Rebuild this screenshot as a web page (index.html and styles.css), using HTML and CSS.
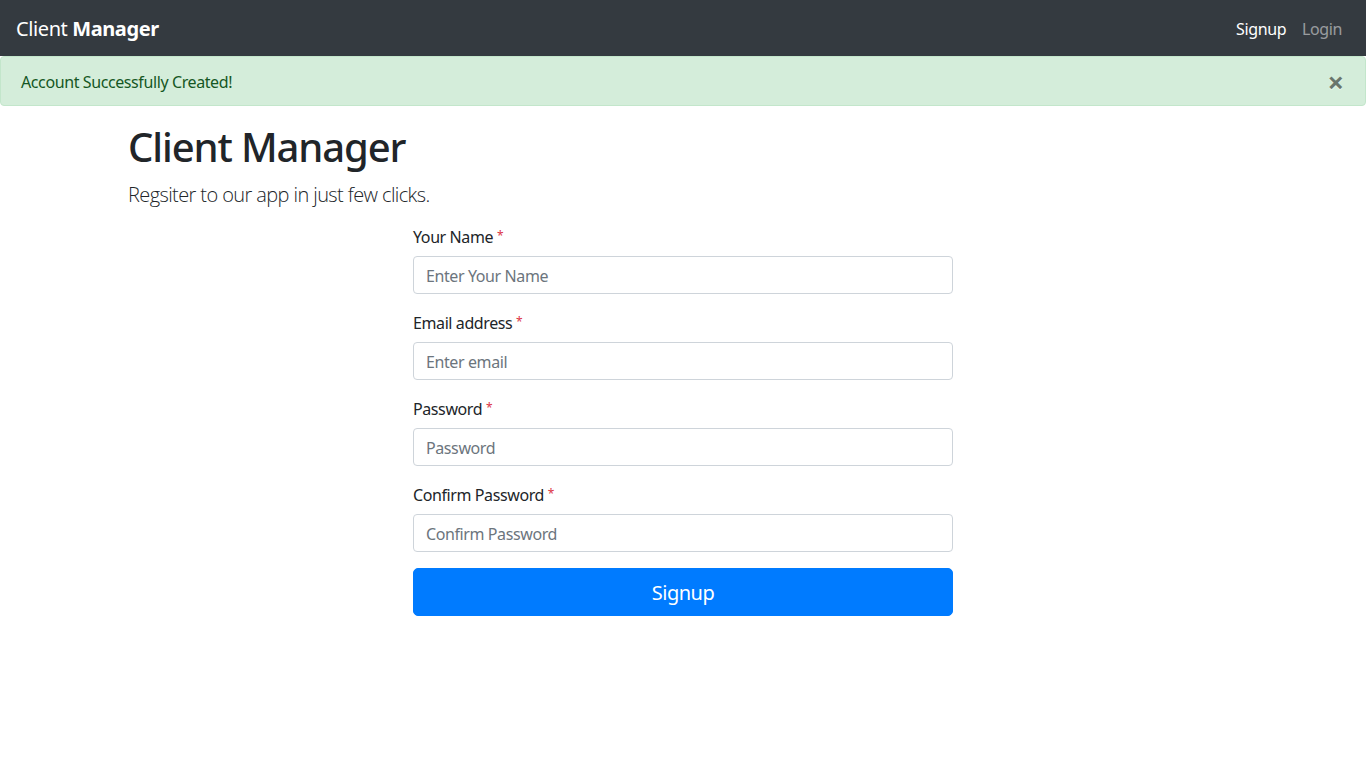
FILE: index.html
```html
<!DOCTYPE html>
<html lang="en">
<head>
<meta charset="utf-8">
<title>Client Manager</title>
<link rel="stylesheet" href="styles.css">
</head>
<body>
<nav class="navbar">
  <a class="brand" href="#">Client <b>Manager</b></a>
  <ul class="nav">
    <li><a class="nav-link active" href="#">Signup</a></li>
    <li><a class="nav-link" href="#">Login</a></li>
  </ul>
</nav>
<div class="alert">
  <span>Account Successfully Created!</span>
  <button class="close" type="button" aria-label="Close">&times;</button>
</div>
<main class="container">
  <h1 class="title">Client Manager</h1>
  <p class="lead">Regsiter to our app in just few clicks.</p>
  <div class="row">
    <form class="form-col">
      <div class="form-group">
        <label>Your Name <span class="req">*</span></label>
        <input class="form-control" type="text" placeholder="Enter Your Name">
      </div>
      <div class="form-group">
        <label>Email address <span class="req">*</span></label>
        <input class="form-control" type="email" placeholder="Enter email">
      </div>
      <div class="form-group">
        <label>Password <span class="req">*</span></label>
        <input class="form-control" type="password" placeholder="Password">
      </div>
      <div class="form-group">
        <label>Confirm Password <span class="req">*</span></label>
        <input class="form-control" type="password" placeholder="Confirm Password">
      </div>
      <button class="btn-primary" type="button">Signup</button>
    </form>
  </div>
</main>
</body>
</html>
```
FILE: styles.css
```css
* { box-sizing: border-box; }
html, body { margin: 0; }
body {
  font-family: "Segoe UI", "Noto Sans", "Open Sans", sans-serif;
  font-size: 16px;
  line-height: 1.5;
  letter-spacing: -0.025em;
  color: #212529;
  background: #fff;
}
.navbar {
  height: 56px;
  background: #343a40;
  display: flex;
  align-items: center;
  justify-content: space-between;
  padding: 10px 16px 8px;
}
.brand {
  color: #fff;
  text-decoration: none;
  font-size: 20px;
  line-height: 30px;
}
.brand b { font-weight: 700; }
.nav {
  list-style: none;
  margin: 0;
  padding: 0;
  display: flex;
}
.nav-link {
  display: block;
  padding: 8px;
  color: rgba(255,255,255,.5);
  text-decoration: none;
}
.nav-link.active { color: #fff; }
.alert {
  position: relative;
  background: #d4edda;
  border: 1px solid #c3e6cb;
  color: #155724;
  border-radius: 4px;
  padding: 13px 64px 11px 20px;
  margin-bottom: 16px;
}
.close {
  position: absolute;
  top: 0;
  right: 0;
  padding: 10px 21px;
  background: transparent;
  border: 0;
  font-family: "Noto Sans", sans-serif;
  font-size: 29px;
  font-weight: 700;
  line-height: 1;
  letter-spacing: 0;
  color: #000;
  opacity: .5;
  text-shadow: 0 1px 0 #fff;
  cursor: pointer;
}
.container {
  max-width: 1140px;
  margin: 0 auto;
  padding: 0 15px;
}
.title {
  margin: 0 0 10px;
  padding-top: 2px;
  font-size: 40px;
  font-weight: 500;
  line-height: 46px;
  letter-spacing: -0.028em;
}
.lead {
  margin: 0 0 14px;
  font-family: "Open Sans", "Noto Sans", sans-serif;
  font-size: 20px;
  font-weight: 300;
  letter-spacing: -0.03em;
}
.row {
  display: flex;
  justify-content: center;
  margin: 0 -15px;
}
.form-col {
  width: 50%;
  padding: 0 15px;
}
.form-group { margin-bottom: 16px; }
label {
  display: inline-block;
  margin-bottom: 8px;
  padding-top: 1px;
  height: 24px;
}
.req {
  color: #dc3545;
  font-size: 12px;
  vertical-align: 3px;
}
.form-control {
  display: block;
  width: 100%;
  height: 38px;
  padding: 7px 12px 5px;
  font-family: inherit;
  font-size: 16px;
  letter-spacing: -0.025em;
  line-height: 1.5;
  color: #495057;
  background: #fff;
  border: 1px solid #ced4da;
  border-radius: 4px;
}
.form-control::placeholder { color: #6c757d; opacity: 1; }
.btn-primary {
  display: block;
  width: 100%;
  padding: 9px 16px 7px;
  font-family: inherit;
  font-size: 20px;
  letter-spacing: -0.025em;
  line-height: 1.5;
  color: #fff;
  background: #007bff;
  border: 1px solid #007bff;
  border-radius: 5px;
  cursor: pointer;
}
```
